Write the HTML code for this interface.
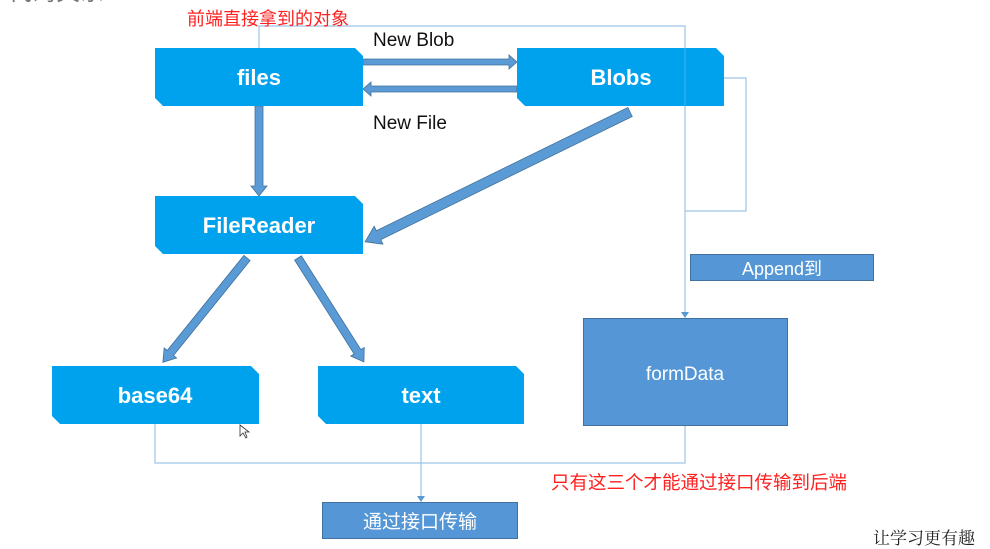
<!DOCTYPE html>
<html><head><meta charset="utf-8"><style>
html,body{margin:0;padding:0;background:#fff;width:990px;height:549px;overflow:hidden}
svg{display:block}
</style></head><body>
<svg width="990" height="549" viewBox="0 0 990 549" xmlns="http://www.w3.org/2000/svg" font-family="Liberation Sans, Noto Sans CJK SC, sans-serif">
<text x="8" y="0" font-size="24" fill="#777">代码关系</text>
<g fill="none" stroke="#9dc3e6" stroke-width="1.2">
<polyline points="259,48 259,26 685,26 685,313"/>
<polyline points="724,78 746,78 746,211 685,211"/>
<polyline points="155,424 155,463 685,463 685,425"/>
<line x1="421" y1="424" x2="421" y2="497"/>
</g>
<polygon points="681,312 689,312 685,318" fill="#5b9bd5"/>
<polygon points="417,496 425,496 421,502" fill="#5b9bd5"/>
<text x="187" y="25" font-size="18" fill="#ff2020">前端直接拿到的对象</text>
<text x="551" y="489" font-size="18.5" fill="#ff2020">只有这三个才能通过接口传输到后端</text>
<text x="373" y="46" font-size="19" fill="#111">New Blob</text>
<text x="373" y="129" font-size="19" fill="#111">New File</text>
<g fill="#5b9bd5" stroke="#41719c" stroke-width="0.8">
<polygon transform="translate(363,62)" points="0,-3 146,-3 146,-7 154,0 146,7 146,3 0,3"/>
<polygon transform="translate(517,89) rotate(180)" points="0,-3 146,-3 146,-7 154,0 146,7 146,3 0,3"/>
<polygon transform="translate(259,106) rotate(90)" points="0,-4 80,-4 80,-8 90,0 80,8 80,4 0,4"/>
<polygon transform="translate(630,112) rotate(153.9)" points="0,-5 280,-5 280,-10 295,0 280,10 280,5 0,5"/>
<polygon transform="translate(247,258) rotate(128.9)" points="0,-4 122,-4 122,-8 134,0 122,8 122,4 0,4"/>
<polygon transform="translate(298,258) rotate(57.6)" points="0,-4 111,-4 111,-8 123,0 111,8 111,4 0,4"/>
</g>
<g fill="#00a2ed">
<polygon points="155,48 355,48 363,56 363,106 163,106 155,98"/>
<polygon points="517,48 716,48 724,56 724,106 525,106 517,98"/>
<polygon points="155,196 355,196 363,204 363,254 163,254 155,246"/>
<polygon points="52,366 251,366 259,374 259,424 60,424 52,416"/>
<polygon points="318,366 516,366 524,374 524,424 326,424 318,416"/>
</g>
<line x1="685" y1="48" x2="685" y2="106" stroke="#3fb4ef" stroke-width="1"/>
<g fill="#fff" font-weight="bold" font-size="22" text-anchor="middle">
<text x="259" y="85">files</text>
<text x="621" y="85">Blobs</text>
<text x="259" y="233">FileReader</text>
<text x="155" y="403">base64</text>
<text x="421" y="403">text</text>
</g>
<rect x="583.5" y="318.5" width="204" height="107" fill="#5597d6" stroke="#41719c"/>
<text x="685" y="380" font-size="19" fill="#fff" text-anchor="middle">formData</text>
<rect x="690.5" y="254.5" width="183" height="26" fill="#5597d6" stroke="#41719c"/>
<text x="782" y="275" font-size="18" fill="#fff" text-anchor="middle">Append到</text>
<rect x="322.5" y="502.5" width="195" height="36" fill="#5597d6" stroke="#41719c"/>
<text x="420" y="528" font-size="19" fill="#fff" text-anchor="middle">通过接口传输</text>
<polygon points="240,425 240,436 243,433 246,438 247,437 245,432 249,432" fill="#fff" stroke="#333" stroke-width="0.8"/>
<text x="873" y="544" font-size="17" fill="#222" font-family="Noto Serif CJK SC, serif">让学习更有趣</text>
</svg>
</body></html>
